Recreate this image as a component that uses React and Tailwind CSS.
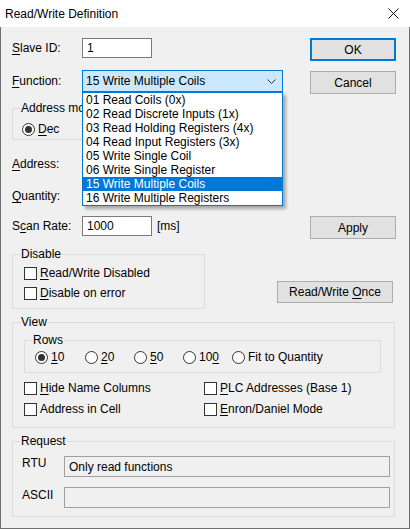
import React from 'react';

const functions = [
    '01 Read Coils (0x)',
    '02 Read Discrete Inputs (1x)',
    '03 Read Holding Registers (4x)',
    '04 Read Input Registers (3x)',
    '05 Write Single Coil',
    '06 Write Single Register',
    '15 Write Multiple Coils',
    '16 Write Multiple Registers',
];

const U = ({ children }) => <span className="underline underline-offset-[2px] decoration-1">{children}</span>;

const CheckBox = ({ children }) => (
    <div className="flex items-center h-[20px]">
        <span className="w-[13px] h-[13px] border border-[#333333] bg-white shrink-0" />
        <span className="ml-[3px] whitespace-nowrap">{children}</span>
    </div>
);

const Radio = ({ checked, children, className = '' }) => (
    <div className={`flex items-center h-[20px] ${className}`}>
        <span className="w-[13px] h-[13px] rounded-full border border-[#333333] bg-white shrink-0 flex items-center justify-center">
            {checked && <span className="w-[7px] h-[7px] rounded-full bg-[#333333]" />}
        </span>
        <span className="ml-[3px] whitespace-nowrap">{children}</span>
    </div>
);

// fieldset keeps no padding so the legend sits at a fixed spot; padding goes on the inner div
const Group = ({ title, className = '', inner = '', children }) => (
    <fieldset className={`border border-[#dcdcdc] ${className}`}>
        <legend className="ml-[7px] px-[1px] leading-[14px] whitespace-nowrap">{title}</legend>
        <div className={inner}>{children}</div>
    </fieldset>
);

const Button = ({ children, primary, className = '' }) => (
    <button
        className={`flex items-center justify-center bg-[#e1e1e1] ${primary ? 'border-2 border-[#0078d7]' : 'border border-[#adadad]'} ${className}`}
    >
        {children}
    </button>
);

export default function App() {
    return (
        <div className="w-[410px] h-[529px] flex flex-col bg-[#f0f0f0] text-[12px] leading-[14px] text-black font-['Liberation_Sans',Arial,sans-serif] overflow-hidden">
            {/* Title bar */}
            <div className="h-[27px] bg-white flex items-center justify-between pl-[5px] pr-[11px] shrink-0">
                <span>Read/Write Definition</span>
                <svg width="11" height="11" viewBox="0 0 11 11">
                    <path d="M0.5 0.5 L10.5 10.5 M10.5 0.5 L0.5 10.5" stroke="#111" strokeWidth="1" />
                </svg>
            </div>

            <div className="flex-1 border-x border-b border-[#707070] pl-[11px]">
                {/* Top section */}
                <div className="flex">
                    <div className="w-[298px] pt-[11px]">
                        <div className="flex items-center h-[20px]">
                            <span className="w-[70px]"><U>S</U>lave ID:</span>
                            <div className="w-[70px] h-[20px] bg-white border border-[#7a7a7a] pl-[4px] flex items-center">1</div>
                        </div>

                        <div className="flex items-center h-[22px] mt-[12px] relative z-10">
                            <span className="w-[70px]"><U>F</U>unction:</span>
                            <div className="relative w-[201px] h-[22px]">
                                <div className="w-full h-full bg-[#cce8ff] border border-[#0078d7] pl-[3px] pr-[6px] flex items-center justify-between">
                                    <span>15 Write Multiple Coils</span>
                                    <svg width="9" height="5" viewBox="0 0 9 5">
                                        <path d="M0.5 0.5 L4.5 4.5 L8.5 0.5" stroke="#333" strokeWidth="1" fill="none" />
                                    </svg>
                                </div>
                                <div className="absolute left-0 top-[22px] w-[201px] bg-white border border-[#0078d7] shadow-[3px_3px_3px_rgba(0,0,0,0.3)]">
                                    {functions.map((f) => (
                                        <div
                                            key={f}
                                            className={`h-[14px] pl-[3px] leading-[14px] whitespace-nowrap ${f.startsWith('15') ? 'bg-[#0078d7] text-white' : ''}`}
                                        >
                                            {f}
                                        </div>
                                    ))}
                                </div>
                            </div>
                        </div>

                        <Group title="Address mo" className="w-[260px] mt-[9px]" inner="pt-[4px] pl-[9px]">
                            <Radio checked><U>D</U>ec</Radio>
                        </Group>

                        <div className="flex items-center h-[20px] mt-[14px]">
                            <span><U>A</U>ddress:</span>
                        </div>
                        <div className="flex items-center h-[20px] mt-[12px]">
                            <span><U>Q</U>uantity:</span>
                        </div>
                        <div className="flex items-center h-[20px] mt-[10px]">
                            <span className="w-[70px]">S<U>c</U>an Rate:</span>
                            <div className="w-[70px] h-[20px] bg-white border border-[#7a7a7a] pl-[4px] flex items-center">1000</div>
                            <span className="ml-[5px]">[ms]</span>
                        </div>
                    </div>

                    <div className="w-[86px] pt-[11px]">
                        <Button primary className="w-[86px] h-[23px]">OK</Button>
                        <Button className="w-[86px] h-[23px] mt-[10px]">Cancel</Button>
                        <Button className="w-[86px] h-[23px] mt-[122px]">Apply</Button>
                    </div>
                </div>

                {/* Disable */}
                <div className="flex items-start mt-[8px]">
                    <Group title="Disable" className="w-[193px]" inner="pt-[2px] pb-[5px] pl-[11px]">
                        <CheckBox><U>R</U>ead/Write Disabled</CheckBox>
                        <CheckBox><U>D</U>isable on error</CheckBox>
                    </Group>
                    <Button className="ml-[72px] mt-[34px] w-[116px] h-[22px]">
                        <span>Read/Write <U>O</U>nce</span>
                    </Button>
                </div>

                {/* View */}
                <Group title="View" className="w-[383px] mt-[6px]" inner="pb-[8px]">
                    <Group title="Rows" className="w-[357px] ml-[11px] mt-[4px]" inner="pb-[5px] pl-[10px]">
                        <div className="flex items-center">
                            <Radio checked className="w-[50px]"><U>1</U>0</Radio>
                            <Radio className="w-[49px]"><U>2</U>0</Radio>
                            <Radio className="w-[49px]"><U>5</U>0</Radio>
                            <Radio className="w-[49px]">10<U>0</U></Radio>
                            <Radio>Fit to Quantity</Radio>
                        </div>
                    </Group>
                    <div className="grid grid-cols-[180px_1fr] ml-[11px] mt-[5px] gap-y-[1px]">
                        <CheckBox><U>H</U>ide Name Columns</CheckBox>
                        <CheckBox><U>P</U>LC Addresses (Base 1)</CheckBox>
                        <CheckBox>Address in Cell</CheckBox>
                        <CheckBox><U>E</U>nron/Daniel Mode</CheckBox>
                    </div>
                </Group>

                {/* Request */}
                <Group title="Request" className="w-[383px] mt-[6px]" inner="pb-[8px] pl-[9px]">
                    <div className="flex items-start mt-[8px]">
                        <span className="w-[42px]">RTU</span>
                        <div className="w-[326px] h-[21px] border border-[#a0a0a0] pl-[4px] flex items-center">Only read functions</div>
                    </div>
                    <div className="flex items-start mt-[10px]">
                        <span className="w-[42px] mt-[1px]">ASCII</span>
                        <div className="w-[326px] h-[21px] border border-[#a0a0a0]" />
                    </div>
                </Group>
            </div>
        </div>
    );
}
